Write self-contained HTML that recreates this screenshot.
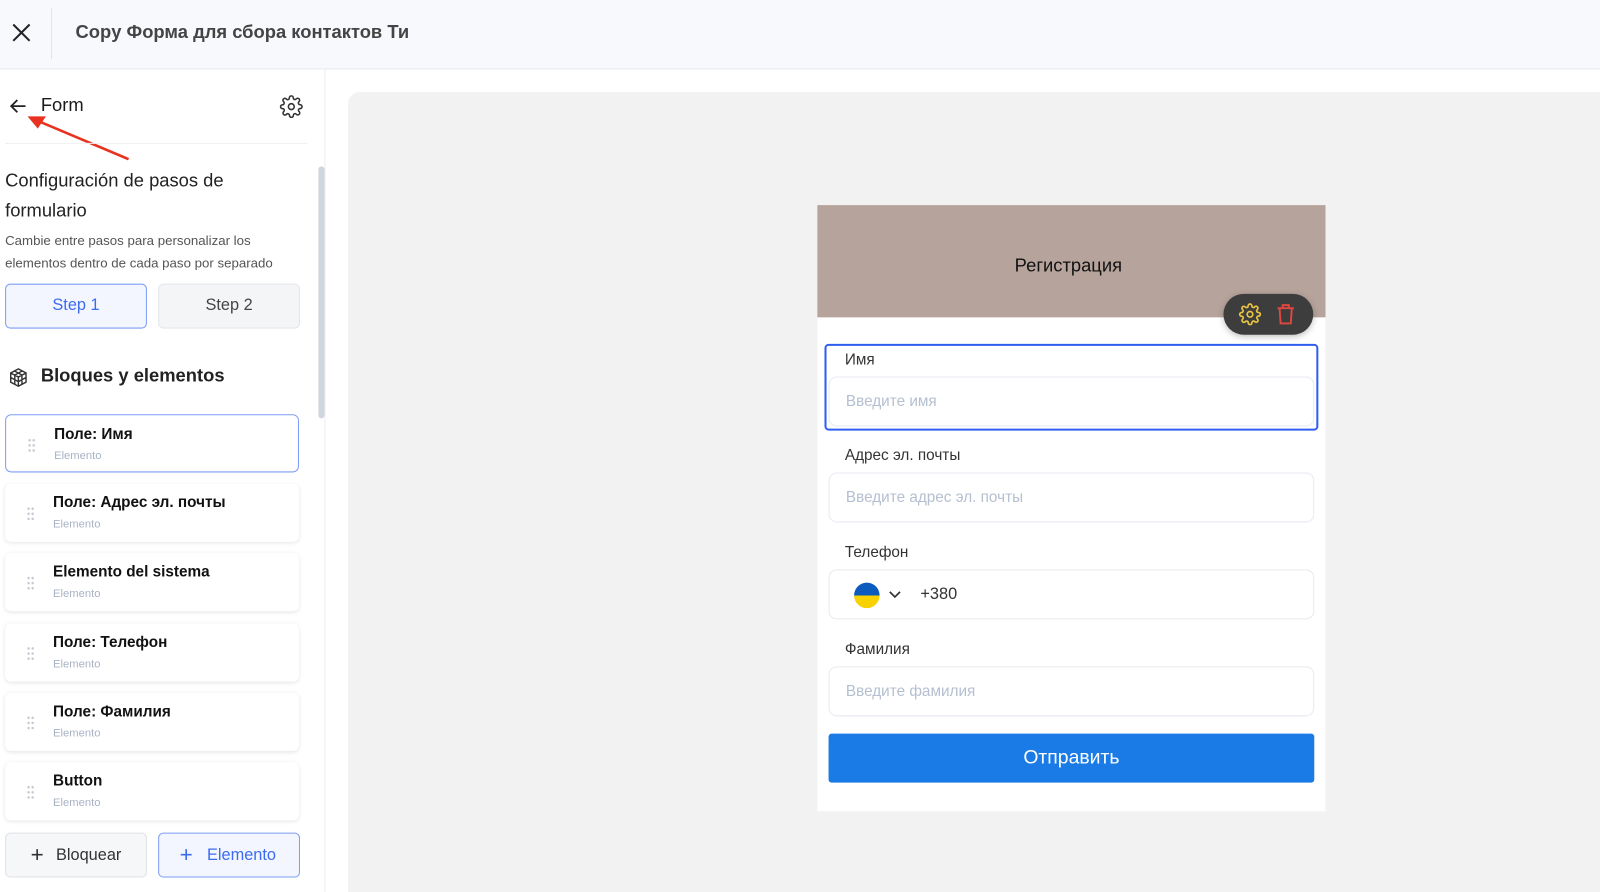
<!DOCTYPE html>
<html><head><meta charset="utf-8"><style>
*{box-sizing:border-box;margin:0;padding:0}
html,body{width:1600px;height:892px;overflow:hidden;background:#fff}
body{font-family:"Liberation Sans","Noto Sans CJK SC",sans-serif;color:#1a1a1a;position:relative}
#w{position:absolute;left:0;top:0;width:1568px;height:875px;transform:scale(1.0204);transform-origin:0 0}
.abs{position:absolute}
.top{left:0;top:0;width:1568px;height:68px;background:#f8f9fc;border-bottom:1px solid #e8eaef}
.card{position:absolute;left:5px;width:288px;height:57px;background:#fff;border-radius:6px;box-shadow:0 1px 4px rgba(0,0,0,.1)}
.card .t{position:absolute;left:47px;top:10px;font-size:15px;color:#111;font-weight:600}
.card .s{position:absolute;left:47px;top:34px;font-size:11px;color:#a9b3c5}
.card .d{position:absolute;left:21px;top:22px;width:8px;height:14px;background:radial-gradient(circle,#c3c8d2 1.1px,transparent 1.4px) 0 0/4px 5px}
.lbl{position:absolute;left:828px;font-size:15px;color:#333}
.inp{position:absolute;left:812px;width:476px;height:49px;border:1px solid #e6e9ef;border-radius:8px;background:#fff}
.ph{position:absolute;left:16px;top:15px;font-size:15px;color:#b4bfd0}
</style></head><body><div id="w">
<div class="abs top"></div>
<svg class="abs" style="left:11px;top:22px" width="20" height="20" viewBox="0 0 20 20"><path d="M2 2L18 18M18 2L2 18" stroke="#222" stroke-width="2"/></svg>
<div class="abs" style="left:50px;top:8px;width:1px;height:50px;background:#e2e4ea"></div>
<div class="abs" style="left:74px;top:21px;font-size:18px;font-weight:bold;color:#444">Copy Форма для сбора контактов Ти</div>

<div class="abs" style="left:318px;top:68px;width:1px;height:824px;background:#eceef2"></div>
<div class="abs" style="left:312px;top:163px;width:6px;height:247px;background:#d0d6de;border-radius:3px"></div>
<svg class="abs" style="left:9px;top:96px" width="18" height="16" viewBox="0 0 18 16"><path d="M16 8H2M8 2L2 8l6 6" stroke="#222" stroke-width="1.8" fill="none"/></svg>
<div class="abs" style="left:40px;top:93px;font-size:18px">Form</div>
<svg class="abs" style="left:274px;top:93px" width="23" height="23" viewBox="0 0 24 24" fill="none" stroke="#333" stroke-width="1.6"><circle cx="12" cy="12" r="3"/><path d="M19.4 15a1.7 1.7 0 00.3 1.8l.1.1a2 2 0 11-2.8 2.8l-.1-.1a1.7 1.7 0 00-1.8-.3 1.7 1.7 0 00-1 1.5V21a2 2 0 11-4 0v-.1a1.7 1.7 0 00-1.1-1.5 1.7 1.7 0 00-1.8.3l-.1.1a2 2 0 11-2.8-2.8l.1-.1a1.7 1.7 0 00.3-1.8 1.7 1.7 0 00-1.5-1H3a2 2 0 110-4h.1a1.7 1.7 0 001.5-1.1 1.7 1.7 0 00-.3-1.8l-.1-.1a2 2 0 112.8-2.8l.1.1a1.7 1.7 0 001.8.3H9a1.7 1.7 0 001-1.5V3a2 2 0 114 0v.1a1.7 1.7 0 001 1.5 1.7 1.7 0 001.8-.3l.1-.1a2 2 0 112.8 2.8l-.1.1a1.7 1.7 0 00-.3 1.8V9a1.7 1.7 0 001.5 1H21a2 2 0 110 4h-.1a1.7 1.7 0 00-1.5 1z"/></svg>
<svg class="abs" style="left:24px;top:108px" width="104" height="52" viewBox="0 0 104 52"><path d="M102 48L12 10" stroke="#e8321f" stroke-width="2.5"/><path d="M3 6l18 0-8 12z" fill="#e8321f"/></svg>
<div class="abs" style="left:5px;top:140px;width:296px;height:1px;background:#eef0f3"></div>
<div class="abs" style="left:5px;top:163px;font-size:18px;line-height:29px;color:#222">Configuración de pasos de<br>formulario</div>
<div class="abs" style="left:5px;top:225px;font-size:13px;line-height:22px;color:#555">Cambie entre pasos para personalizar los<br>elementos dentro de cada paso por separado</div>
<div class="abs" style="left:5px;top:278px;width:139px;height:44px;border:1px solid #7d9cf5;background:#f3f6ff;border-radius:5px;text-align:center;line-height:42px;font-size:16px;color:#3b6cf0">Step 1</div>
<div class="abs" style="left:155px;top:278px;width:139px;height:44px;border:1px solid #e4e6ea;background:#f4f5f7;border-radius:5px;text-align:center;line-height:42px;font-size:16px;color:#444">Step 2</div>
<svg class="abs" style="left:8px;top:360px" width="20" height="20" viewBox="0 0 20 20" fill="none" stroke="#333" stroke-width="1.4"><path d="M10 1.5l7.5 4v9L10 18.5l-7.5-4v-9z M2.5 5.5L10 9.5l7.5-4 M10 9.5v9 M6 3.5l7.5 4v9 M14 3.5L6.5 7.5v9 M2.5 10l7.5 4 7.5-4"/></svg>
<div class="abs" style="left:40px;top:358px;font-size:18px;color:#222;font-weight:600">Bloques y elementos</div>

<div class="card" style="top:406px;border:1px solid #7d9cf5;box-shadow:none"><div class="d"></div><div class="t">Поле: Имя</div><div class="s">Elemento</div></div>
<div class="card" style="top:474px"><div class="d"></div><div class="t">Поле: Адрес эл. почты</div><div class="s">Elemento</div></div>
<div class="card" style="top:542px"><div class="d"></div><div class="t">Elemento del sistema</div><div class="s">Elemento</div></div>
<div class="card" style="top:611px"><div class="d"></div><div class="t">Поле: Телефон</div><div class="s">Elemento</div></div>
<div class="card" style="top:679px"><div class="d"></div><div class="t">Поле: Фамилия</div><div class="s">Elemento</div></div>
<div class="card" style="top:747px"><div class="d"></div><div class="t">Button</div><div class="s">Elemento</div></div>
<div class="abs" style="left:5px;top:816px;width:139px;height:44px;border:1px solid #e0e2e6;background:#f6f7f9;border-radius:5px;font-size:16px;color:#333;line-height:42px;padding-left:24px"><span style="font-size:22px;vertical-align:-2px;margin-right:12px">+</span>Bloquear</div>
<div class="abs" style="left:155px;top:816px;width:139px;height:44px;border:1px solid #7d9cf5;background:#f3f6ff;border-radius:5px;font-size:16px;color:#3b6cf0;line-height:42px;padding-left:20px"><span style="font-size:22px;vertical-align:-2px;margin-right:14px">+</span>Elemento</div>

<div class="abs" style="left:341px;top:90px;width:1259px;height:802px;background:#f2f2f2;border-radius:12px 0 0 0"></div>
<div class="abs" style="left:801px;top:201px;width:498px;height:594px;background:#fff"></div>
<div class="abs" style="left:801px;top:201px;width:498px;height:110px;background:#b6a39b"></div>
<div class="abs" style="left:801px;top:250px;width:492px;text-align:center;font-size:18px;color:#111">Регистрация</div>
<div class="abs" style="left:1199px;top:288px;width:88px;height:40px;background:#3d3d3d;border-radius:20px;box-shadow:0 2px 6px rgba(0,0,0,.25)"></div>
<svg class="abs" style="left:1214px;top:297px" width="22" height="22" viewBox="0 0 24 24" fill="none" stroke="#e8c440" stroke-width="1.8"><circle cx="12" cy="12" r="3"/><path d="M19.4 15a1.7 1.7 0 00.3 1.8l.1.1a2 2 0 11-2.8 2.8l-.1-.1a1.7 1.7 0 00-1.8-.3 1.7 1.7 0 00-1 1.5V21a2 2 0 11-4 0v-.1a1.7 1.7 0 00-1.1-1.5 1.7 1.7 0 00-1.8.3l-.1.1a2 2 0 11-2.8-2.8l.1-.1a1.7 1.7 0 00.3-1.8 1.7 1.7 0 00-1.5-1H3a2 2 0 110-4h.1a1.7 1.7 0 001.5-1.1 1.7 1.7 0 00-.3-1.8l-.1-.1a2 2 0 112.8-2.8l.1.1a1.7 1.7 0 001.8.3H9a1.7 1.7 0 001-1.5V3a2 2 0 114 0v.1a1.7 1.7 0 001 1.5 1.7 1.7 0 001.8-.3l.1-.1a2 2 0 112.8 2.8l-.1.1a1.7 1.7 0 00-.3 1.8V9a1.7 1.7 0 001.5 1H21a2 2 0 110 4h-.1a1.7 1.7 0 00-1.5 1z"/></svg>
<svg class="abs" style="left:1250px;top:297px" width="20" height="22" viewBox="0 0 20 22" fill="none" stroke="#e0483f" stroke-width="1.9"><path d="M2 5h16M7 5V2h6v3M4 5l1 15h10l1-15"/></svg>

<div class="abs" style="left:808px;top:337px;width:484px;height:85px;border:2px solid #2f5ff0;border-radius:4px"></div>
<div class="lbl" style="top:344px">Имя</div>
<div class="inp" style="top:369px"><div class="ph">Введите имя</div></div>
<div class="lbl" style="top:438px">Адрес эл. почты</div>
<div class="inp" style="top:463px"><div class="ph">Введите адрес эл. почты</div></div>
<div class="lbl" style="top:533px">Телефон</div>
<div class="inp" style="top:558px"><div class="abs" style="left:24px;top:12px;width:25px;height:25px;border-radius:50%;background:linear-gradient(#0a5bbd 50%,#f7d100 50%)"></div>
<svg class="abs" style="left:57px;top:19px" width="14" height="10" viewBox="0 0 14 10"><path d="M2 2l5 5 5-5" stroke="#333" stroke-width="1.7" fill="none"/></svg>
<div class="abs" style="left:89px;top:15px;font-size:16px;color:#333">+380</div></div>
<div class="lbl" style="top:628px">Фамилия</div>
<div class="inp" style="top:653px"><div class="ph">Введите фамилия</div></div>
<div class="abs" style="left:812px;top:719px;width:476px;height:48px;background:#1a7be6;border-radius:3px;color:#fff;font-size:19px;text-align:center;line-height:48px">Отправить</div>
</div></body></html>
